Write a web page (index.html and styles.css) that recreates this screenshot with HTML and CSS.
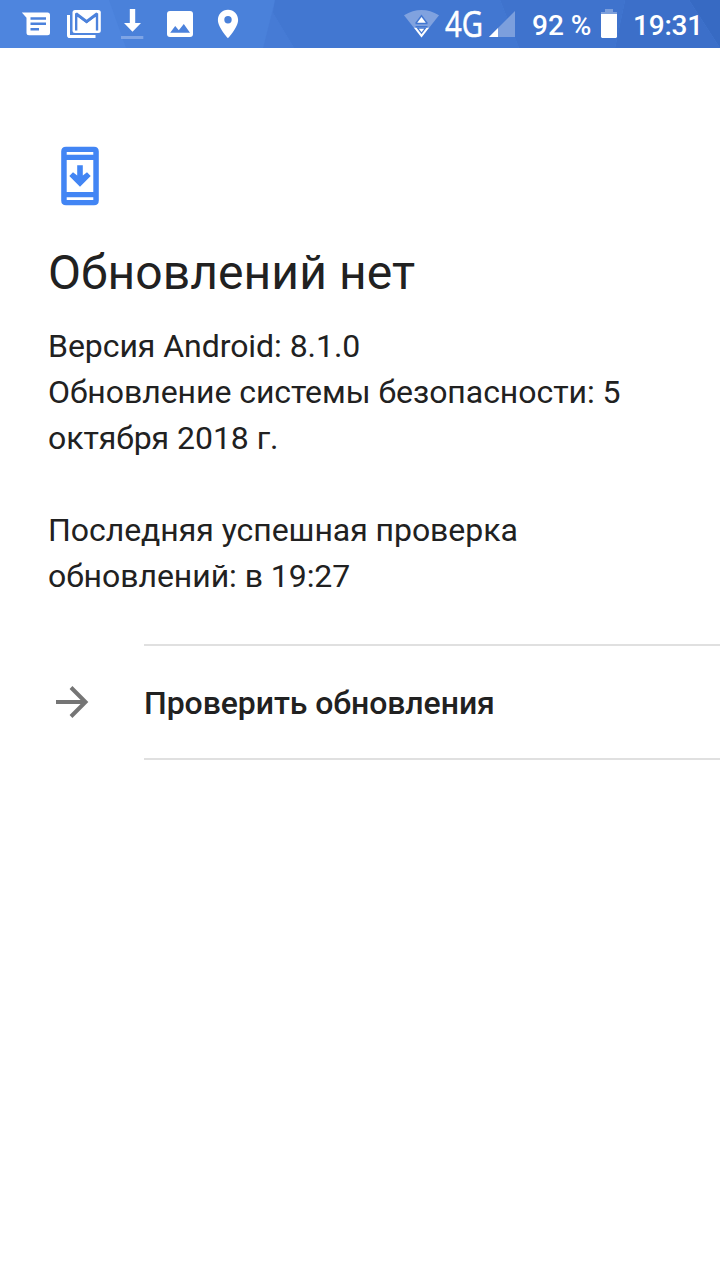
FILE: index.html
```html
<!DOCTYPE html>
<html lang="ru">
<head>
    <meta charset="UTF-8">
    <meta name="viewport" content="width=device-width, initial-scale=1.0">
    <title>Обновление системы</title>
    <link rel="stylesheet" href="styles.css">
</head>
<body>
    <header class="status-bar">
        <svg class="status-bg" viewBox="0 0 720 48">
            <path fill="#4a81da" d="M109 0H275L263 48H126Z"/>
            <path fill="#467bd5" d="M275 0H285L273 13L294 48H263Z"/>
            <path fill="#4277d1" d="M275 0H500L519 48H294L273 13Z"/>
            <path fill="#3f73cd" d="M500 0H625L615 48H519Z"/>
            <path fill="#3c6fc9" d="M625 0H689L720 48H615Z"/>
            <path fill="#376ac3" d="M689 0H720V48Z"/>
        </svg>
        <div class="notifications">
            <svg viewBox="0 0 48 48">
                <path fill="#fff" d="M9.8 12.6H35.5q2.5 0 2.5 2.5V32.7q0 2.5-2.5 2.5H17q-2.5 0-2.5-2.5V17.7Z"/>
                <path stroke="#4c82dc" stroke-width="2.6" d="M18.5 18.5H34M18.5 23.8H34M18.5 29.2H27"/>
            </svg>
            <svg viewBox="0 0 48 48">
                <path fill="none" stroke="#fff" stroke-width="3" d="M8.5 15V35.2q0 1.3 1.3 1.3H35.5"/>
                <rect x="12.5" y="10" width="28.3" height="23" rx="2.5" fill="#fff"/>
                <path fill="#4c82dc" d="M15 30.5V13.5L17 12.5L26.6 19.8L36.2 12.5L38.2 13.5V30.5H35.6V17L26.6 23.8L17.6 17V30.5Z"/>
                <path fill="#fff" d="M17.6 17L26.6 23.8L35.6 17V31H17.6Z"/>
            </svg>
            <svg viewBox="0 0 48 48">
                <path fill="#fff" d="M21.8 9H27.2V23H33L24.5 31.8L16 23H21.8Z"/>
                <path fill="#7ea4e5" d="M13 36H35.3V39H13Z"/>
            </svg>
            <svg viewBox="0 0 48 48">
                <rect x="11" y="11" width="26" height="26" rx="3" fill="#fff"/>
                <path fill="#4c82dc" d="M14.2 32.7L19.2 26L22.8 30.3L27.8 24L34 32.7Z"/>
            </svg>
            <svg viewBox="0 0 48 48">
                <path fill="#fff" fill-rule="evenodd" d="M24 9.8C18.2 9.8 13.9 14.3 13.9 20C13.9 27.5 24 38.2 24 38.2S34.1 27.5 34.1 20C34.1 14.3 29.8 9.8 24 9.8ZM24 16a3.7 3.7 0 1 1 0 7.4a3.7 3.7 0 1 1 0-7.4Z"/>
            </svg>
        </div>
        <div class="indicators">
            <svg class="wifi" viewBox="0 0 36 48">
                <path fill="#80a2df" d="M0 15.2Q17.5 4.8 35 15.2L17.5 37.5Z"/>
                <path fill="#4277d1" d="M17.5 14.5L23.5 22.5V24.3H11.5V22.5Z"/>
                <path fill="#fff" d="M17.5 17L21.8 22.8H13.2Z"/>
                <path fill="#4277d1" d="M11.5 26H23.5V28H11.5Z"/>
                <path fill="#fff" d="M10 27.8H25L17.5 37.6Z"/>
                <path fill="#4277d1" d="M12.3 27.5H22.7L17.5 34.2Z"/>
                <path fill="#fff" d="M14.8 28.8H20.2L17.5 32.3Z"/>
            </svg>
            <svg class="network" viewBox="0 0 40 48">
                <text x="1" y="37" textLength="38" lengthAdjust="spacingAndGlyphs">4G</text>
            </svg>
            <svg class="signal" viewBox="0 0 27 48">
                <path fill="#7c9fdd" d="M26 11V37H0Z"/>
                <path fill="#fff" d="M9 28V37H0Z"/>
            </svg>
            <span class="percent">92 %</span>
            <svg class="battery" viewBox="0 0 16 48">
                <path fill="#7c9fdb" d="M4 9H12V12H16V14H0V12H4Z"/>
                <path fill="#fff" d="M0 14H16V37L15 38H1L0 37Z"/>
            </svg>
            <span class="clock">19:31</span>
        </div>
    </header>
    <main class="content">
        <svg class="update-icon" viewBox="0 0 64 64">
            <path fill="#4285f4" fill-rule="evenodd" d="M18 2.7H46Q50.8 2.7 50.8 7.5V56.5Q50.8 61.3 46 61.3H18Q13.2 61.3 13.2 56.5V7.5Q13.2 2.7 18 2.7ZM18.7 8V10.7H45.3V8ZM18.7 16V48H45.3V16ZM18.7 53.3V56H45.3V53.3Z"/>
            <path fill="#4285f4" d="M29.2 21.2H34.8V31.4L39 28.2L42.7 32L32 42.7L21.3 32L25 28.2L29.2 31.4Z"/>
        </svg>
        <h1>Обновлений нет</h1>
        <p>Версия Android: 8.1.0<br>Обновление системы безопасности: 5 октября 2018 г.</p>
        <p>Последняя успешная проверка обновлений: в 19:27</p>
    </main>
    <div class="action">
        <svg class="arrow" viewBox="0 0 48 48">
            <path fill="none" stroke="#757575" stroke-width="4" d="M8 24H37M23 9.5L37.5 24L23 38.5"/>
        </svg>
        <div class="action-label">Проверить обновления</div>
    </div>
</body>
</html>
```
FILE: styles.css
```css
body {
    font-family: Roboto, sans-serif;
    background-color: #fff;
    color: #212121;
    margin: 0;
    padding: 0;
}

svg {
    display: block;
    flex-shrink: 0;
}

.status-bar {
    position: relative;
    display: flex;
    justify-content: space-between;
    height: 48px;
    padding: 0 17px 0 12px;
    background-color: #4e85de;
    color: #fff;
}

.status-bg {
    position: absolute;
    top: 0;
    left: 0;
    width: 720px;
    height: 48px;
}

.notifications,
.indicators {
    position: relative;
    display: flex;
}

.notifications svg {
    width: 48px;
    height: 48px;
}

.indicators {
    font-size: 28px;
    font-weight: 500;
    line-height: 52px;
    white-space: nowrap;
}

.wifi {
    width: 36px;
    height: 48px;
}

.network {
    width: 40px;
    height: 48px;
    margin-left: 4px;
    overflow: visible;
    font-family: "Open Sans", sans-serif;
    font-size: 36px;
    font-weight: 400;
    line-height: 1;
    fill: #fff;
    stroke: #fff;
    stroke-width: 0.6px;
}

.signal {
    width: 27px;
    height: 48px;
    margin-left: 5px;
}

.percent {
    width: 69px;
    margin-left: 16px;
}

.battery {
    width: 16px;
    height: 48px;
}

.clock {
    width: 70px;
    margin-left: 16px;
    letter-spacing: -0.2px;
}

.content {
    padding: 96px 48px 0;
}

.update-icon {
    width: 64px;
    height: 64px;
}

h1 {
    margin: 33px 0 18px;
    font-size: 48px;
    font-weight: 400;
    line-height: 64px;
    letter-spacing: 0.1px;
}

p {
    margin: 0 0 46px;
    font-size: 32px;
    line-height: 46px;
    letter-spacing: -0.05px;
}

.content p:last-child {
    margin-bottom: 45px;
}

.action {
    display: flex;
    align-items: center;
    padding-left: 48px;
}

.arrow {
    width: 48px;
    height: 48px;
    margin-right: 48px;
}

.action-label {
    flex: 1;
    padding-top: 2px;
    border-top: 2px solid #e0e0e0;
    border-bottom: 2px solid #e0e0e0;
    font-size: 32px;
    font-weight: 500;
    line-height: 110px;
    letter-spacing: -0.07px;
}
```
